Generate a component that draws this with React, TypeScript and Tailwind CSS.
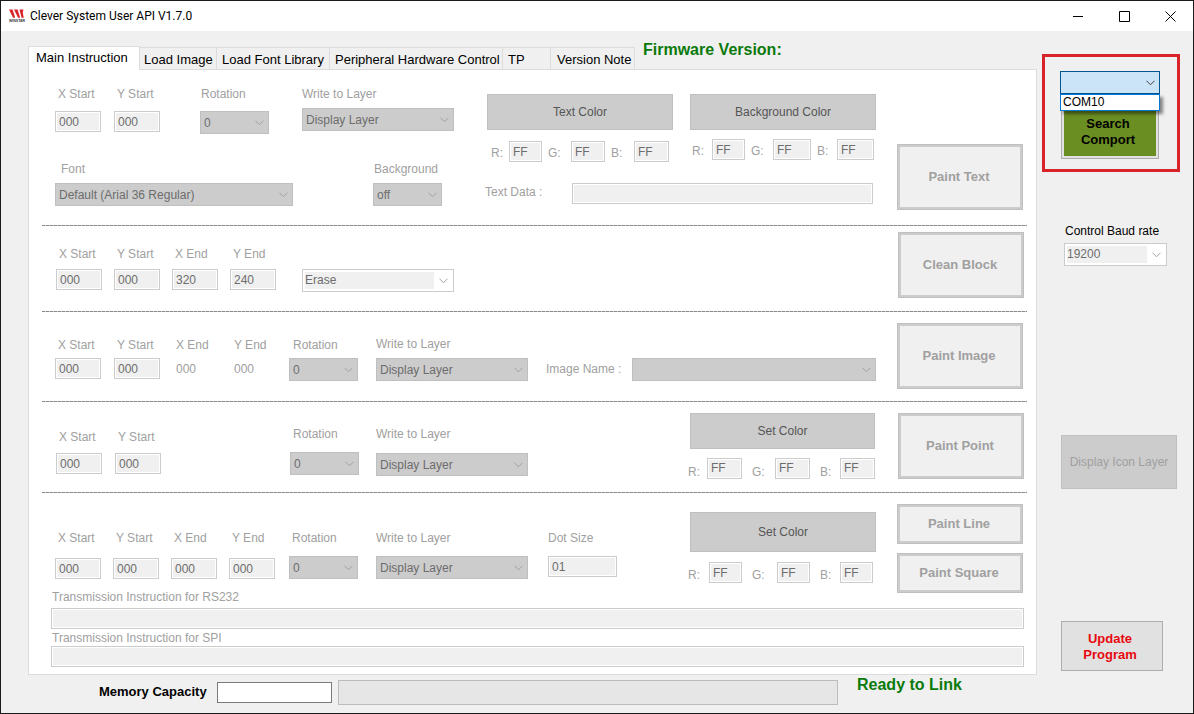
import { useId, type ReactNode } from "react";

function Chevron({ className = "" }: { className?: string }) {
  return (
    <svg
      viewBox="0 0 9 6"
      className={`pointer-events-none absolute top-1/2 right-[5px] h-[6px] w-[9px] -translate-y-1/2 ${className}`}
      fill="none"
      stroke="currentColor"
      aria-hidden="true"
    >
      <path d="M0.5 0.75 4.5 4.75 8.5 0.75" />
    </svg>
  );
}

type BoxProps = { id?: string; value?: string; className?: string; label?: string };

function TextBox({ id, value = "", className = "" }: BoxProps) {
  return (
    <input
      id={id}
      type="text"
      disabled
      defaultValue={value}
      className={`h-[21px] rounded-none border border-[#cccccc] bg-[#f0f0f0] px-[3px] text-xs text-[#6d6d6d] shadow-[inset_0_0_0_1px_#fff] ${className}`}
    />
  );
}

function Combo({ id, value = "", className = "", label }: BoxProps) {
  return (
    <div className={`relative ${className}`}>
      <select
        id={id}
        aria-label={label}
        disabled
        defaultValue={value}
        className="block h-[23px] w-full appearance-none rounded-none border border-[#bfbfbf] bg-[#cccccc] pl-[3px] text-xs text-[#6d6d6d] opacity-100"
      >
        <option>{value}</option>
      </select>
      <Chevron className="text-[#a0a0a0]" />
    </div>
  );
}

function EditCombo({ id, value = "", className = "", label }: BoxProps) {
  return (
    <div className={`relative border border-[#cccccc] bg-white p-0.5 ${className}`}>
      <select
        id={id}
        aria-label={label}
        disabled
        defaultValue={value}
        className="block h-[17px] w-full appearance-none rounded-none border-r-[17px] border-white bg-[#f0f0f0] text-xs leading-[17px] text-[#6d6d6d] opacity-100"
      >
        <option>{value}</option>
      </select>
      <Chevron className="text-[#a0a0a0]" />
    </div>
  );
}

function Field({
  label,
  className = "",
  labelClass = "pl-[3px]",
  children,
}: {
  label: string;
  className?: string;
  labelClass?: string;
  children: (id: string) => ReactNode;
}) {
  const id = useId();
  return (
    <div className={`flex flex-col ${className}`}>
      <label htmlFor={id} className={`whitespace-nowrap text-[#a0a0a0] ${labelClass}`}>
        {label}
      </label>
      {children(id)}
    </div>
  );
}

function Rgb({ className, labelClass, indent = "pl-1.5" }: { className: string; labelClass: string; indent?: string }) {
  const id = useId();
  return (
    <div className={`grid items-center ${className}`}>
      {["R", "G", "B"].map((c) => (
        <div key={c} className="contents">
          <label htmlFor={id + c} className={`text-[#a0a0a0] ${c === "R" ? "" : indent} ${labelClass}`}>
            {c}:
          </label>
          <TextBox id={id + c} value="FF" className="w-full" />
        </div>
      ))}
    </div>
  );
}

function ColorButton({ children, className = "h-9" }: { children: ReactNode; className?: string }) {
  return (
    <button type="button" disabled className={`w-full border border-[#bfbfbf] bg-[#cccccc] text-[#555555] ${className}`}>
      {children}
    </button>
  );
}

function PaintButton({ children, className = "" }: { children: ReactNode; className?: string }) {
  return (
    <button
      type="button"
      disabled
      className={`w-[126px] shrink-0 border border-[#bfbfbf] bg-[#f0f0f0] pr-0.5 text-[13px] font-bold text-[#a0a0a0] shadow-[inset_0_0_0_2px_#cccccc] ${className}`}
    >
      {children}
    </button>
  );
}

function Divider() {
  return <hr className="h-px border-0 bg-[repeating-linear-gradient(90deg,#8a8a8a_0_3px,#c4c4c4_3px_4px)]" />;
}

function TitleBar() {
  return (
    <header className="flex h-[30px] shrink-0 items-center bg-white pl-2">
      <svg viewBox="0 0 17 14" className="h-[14px] w-[17px]" aria-hidden="true">
        <g fill="#d9262c">
          <path d="M0 .5h3.6l2.6 8.3H4z" />
          <path d="M5 .5h3.6l2.6 8.3H9z" />
          <path d="M10.4.5h4l-.6 3.2 1 5.1h-2.2z" />
        </g>
        <text x="0" y="13" fontSize="3.5" fontWeight="bold" fontFamily="Liberation Sans, sans-serif" fill="#333">
          WINSTAR
        </text>
      </svg>
      <h1 className="ml-1 font-[Roboto,sans-serif] text-xs text-black">Clever System User API V1.7.0</h1>
      <div className="ml-auto flex h-full text-black">
        <button type="button" aria-label="Minimize" className="flex w-[45px] items-center justify-center">
          <svg viewBox="0 0 11 11" className="size-[11px]" fill="none" stroke="currentColor">
            <path d="M0 5.5h10" />
          </svg>
        </button>
        <button type="button" aria-label="Maximize" className="flex w-[46px] items-center justify-center">
          <svg viewBox="0 0 11 11" className="size-[11px]" fill="none" stroke="currentColor">
            <path d="M.5.5h10v10h-10z" />
          </svg>
        </button>
        <button type="button" aria-label="Close" className="flex w-[46px] items-center justify-center">
          <svg viewBox="0 0 11 11" className="size-[11px]" fill="none" stroke="currentColor">
            <path d="M.5.5l10 10M10.5.5l-10 10" />
          </svg>
        </button>
      </div>
    </header>
  );
}

function Tabs() {
  const tab =
    "h-[22px] border-t border-r border-[#dcdcdc] bg-[#f0f0f0] pt-0.5 text-left text-[13px] leading-5 whitespace-nowrap";
  return (
    <div className="flex items-end text-black">
      <div role="tablist" className="flex items-end">
        <button
          type="button"
          role="tab"
          aria-selected="true"
          className="relative -mb-px h-6 w-[112px] border border-b-0 border-[#dcdcdc] bg-white pb-0.5 pl-[7px] text-left text-[13px] leading-5 whitespace-nowrap"
        >
          Main Instruction
        </button>
        <button type="button" role="tab" className={`${tab} w-[77px] pl-1`}>Load Image</button>
        <button type="button" role="tab" className={`${tab} w-[113px] pl-[5px]`}>Load Font Library</button>
        <button type="button" role="tab" className={`${tab} w-[173px] pl-[5px]`}>Peripheral Hardware Control</button>
        <button type="button" role="tab" className={`${tab} w-12 pl-[5px]`}>TP</button>
        <button type="button" role="tab" className={`${tab} w-[84px] pl-[6px]`}>Version Note</button>
      </div>
      <p className="mb-[7px] ml-2 text-base leading-6 font-bold text-[#0b7a0b]">Firmware Version:</p>
    </div>
  );
}

function TextSection() {
  const id = useId();
  return (
    <section className="flex items-start pr-1 pb-[15px] pl-[13px]">
      <div className="flex flex-col gap-[27px] pt-4">
        <div className="flex">
          <div className="flex gap-[13px]">
            {["X Start", "Y Start"].map((label) => (
              <Field key={label} label={label} className="w-[46px] gap-[9px]">
                {(i) => <TextBox id={i} value="000" className="w-full" />}
              </Field>
            ))}
          </div>
          <Field label="Rotation" labelClass="pl-px" className="ml-10 w-[69px] gap-[9px]">
            {(i) => <Combo id={i} value="0" />}
          </Field>
          <Field label="Write to Layer" labelClass="" className="ml-[33px] w-[152px] gap-[6px]">
            {(i) => <Combo id={i} value="Display Layer" />}
          </Field>
        </div>
        <div className="flex gap-20">
          <Field label="Font" labelClass="pl-[6px]" className="w-[238px] gap-[6px]">
            {(i) => <Combo id={i} value="Default (Arial 36 Regular)" />}
          </Field>
          <Field label="Background" labelClass="pl-px" className="w-[69px] gap-[6px]">
            {(i) => <Combo id={i} value="off" />}
          </Field>
        </div>
      </div>
      <div className="ml-auto w-[389px] pt-6">
        <div className="grid grid-cols-2 gap-[17px]">
          <div>
            <ColorButton>Text Color</ColorButton>
            <Rgb className="mt-[11px] grid-cols-[18px_33px_29px_34px_29px_35px] pl-1" labelClass="pt-0.5" />
          </div>
          <div>
            <ColorButton>Background Color</ColorButton>
            <Rgb className="mt-[9px] grid-cols-[20px_33px_28px_38px_26px_37px] pl-0.5" labelClass="pt-0.5" />
          </div>
        </div>
        <div className="mt-[21px] -ml-0.5 flex items-center pr-[3px]">
          <label htmlFor={id} className="w-[87px] pb-[3px] text-[#a0a0a0]">Text Data :</label>
          <TextBox id={id} className="min-w-0 flex-1" />
        </div>
      </div>
      <PaintButton className="mt-[74px] ml-[21px] h-[66px]">Paint Text</PaintButton>
    </section>
  );
}

function CleanSection() {
  const fields = [["X Start", "000"], ["Y Start", "000"], ["X End", "320"], ["Y End", "240"]];
  return (
    <section className="flex items-start pr-[3px] pb-[13px] pl-[14px]">
      <div className="flex gap-3 pt-5">
        {fields.map(([label, value]) => (
          <Field key={label} label={label} className="w-[46px] gap-[7px]">
            {(i) => <TextBox id={i} value={value} className="w-full" />}
          </Field>
        ))}
      </div>
      <EditCombo value="Erase" label="Block action" className="mt-[43px] ml-[26px] w-[152px]" />
      <PaintButton className="mt-[6px] ml-auto h-[66px]">Clean Block</PaintButton>
    </section>
  );
}

function ImageSection() {
  const id = useId();
  return (
    <section className="flex items-start pr-1 pb-3 pl-[13px]">
      <div className="flex gap-[13px] pt-[25px]">
        {["X Start", "Y Start"].map((label) => (
          <Field key={label} label={label} className="w-[46px] gap-[5px]">
            {(i) => <TextBox id={i} value="000" className="w-full" />}
          </Field>
        ))}
        {["X End", "Y End"].map((label) => (
          <div key={label} className="flex w-[45px] flex-col gap-2 pl-[3px] text-[#a0a0a0]">
            <span>{label}</span>
            <span>000</span>
          </div>
        ))}
      </div>
      <Field label="Rotation" labelClass="pl-1" className="ml-[13px] w-[69px] gap-[5px] pt-[25px]">
        {(i) => <Combo id={i} value="0" />}
      </Field>
      <Field label="Write to Layer" labelClass="" className="ml-[18px] w-[152px] gap-[6px] pt-6">
        {(i) => <Combo id={i} value="Display Layer" />}
      </Field>
      <div className="mt-[46px] ml-[18px] flex flex-1 items-center">
        <label htmlFor={id} className="w-[86px] pb-0.5 text-[#a0a0a0]">Image Name :</label>
        <Combo id={id} className="flex-1" />
      </div>
      <PaintButton className="mt-[11px] ml-[21px] h-[66px]">Paint Image</PaintButton>
    </section>
  );
}

function PointSection() {
  return (
    <section className="flex items-start pr-[3px] pb-3 pl-[14px]">
      <div className="flex gap-[13px] pt-[27px]">
        {["X Start", "Y Start"].map((label) => (
          <Field key={label} label={label} className="w-[46px] gap-2">
            {(i) => <TextBox id={i} value="000" className="w-full" />}
          </Field>
        ))}
      </div>
      <Field label="Rotation" className="ml-[129px] w-[69px] gap-[10px] pt-6">
        {(i) => <Combo id={i} value="0" />}
      </Field>
      <Field label="Write to Layer" labelClass="" className="ml-[17px] w-[152px] gap-[11px] pt-6">
        {(i) => <Combo id={i} value="Display Layer" />}
      </Field>
      <div className="ml-auto w-[185px] pt-[11px]">
        <ColorButton>Set Color</ColorButton>
        <Rgb className="mt-[7px] -ml-0.5 grid-cols-[19px_35px_33px_35px_30px_35px]" labelClass="pt-2" indent="pl-2.5" />
      </div>
      <PaintButton className="mt-[11px] ml-[23px] h-[66px]">Paint Point</PaintButton>
    </section>
  );
}

function LineSection() {
  return (
    <section className="flex items-start pr-1 pl-[13px]">
      <div className="flex gap-3 pt-[37px]">
        {["X Start", "Y Start", "X End", "Y End"].map((label) => (
          <Field key={label} label={label} className="w-[46px] gap-3">
            {(i) => <TextBox id={i} value="000" className="w-full" />}
          </Field>
        ))}
      </div>
      <Field label="Rotation" className="ml-[14px] w-[69px] gap-[10px] pt-[37px]">
        {(i) => <Combo id={i} value="0" />}
      </Field>
      <Field label="Write to Layer" labelClass="" className="ml-[18px] w-[152px] gap-[10px] pt-[37px]">
        {(i) => <Combo id={i} value="Display Layer" />}
      </Field>
      <Field label="Dot Size" labelClass="" className="ml-5 w-[69px] gap-[10px] pt-[37px]">
        {(i) => <TextBox id={i} value="01" className="w-full" />}
      </Field>
      <div className="ml-auto w-[186px] pt-[19px]">
        <ColorButton className="h-10">Set Color</ColorButton>
        <Rgb className="mt-[10px] -ml-0.5 grid-cols-[21px_33px_35px_33px_30px_33px]" labelClass="pt-1" indent="pl-2.5" />
      </div>
      <div className="mt-[11px] ml-[21px] flex flex-col gap-[9px]">
        <PaintButton className="h-10">Paint Line</PaintButton>
        <PaintButton className="h-10">Paint Square</PaintButton>
      </div>
    </section>
  );
}

function MainPanel() {
  return (
    <main className="flex-1 border border-[#dcdcdc] bg-white pr-[9px] pl-[13px]">
      <TextSection />
      <Divider />
      <CleanSection />
      <Divider />
      <ImageSection />
      <Divider />
      <PointSection />
      <Divider />
      <LineSection />
      <div className="flex flex-col pr-[3px] pb-[7px] pl-[9px]">
        <Field label="Transmission Instruction for RS232" labelClass="pl-px" className="-mt-1 gap-[3px]">
          {(i) => <TextBox id={i} className="w-full" />}
        </Field>
        <Field label="Transmission Instruction for SPI" labelClass="pl-px" className="mt-px">
          {(i) => <TextBox id={i} className="w-full" />}
        </Field>
      </div>
    </main>
  );
}

function StatusBar() {
  return (
    <footer className="flex h-[38px] shrink-0 items-start pl-[71px]">
      <label htmlFor="memory" className="mt-2 w-[118px] text-[13px] font-bold text-black">
        Memory Capacity
      </label>
      <input id="memory" type="text" className="mt-[7px] h-[21px] w-[115px] rounded-none border border-[#7a7a7a] bg-white px-1" />
      <div
        role="progressbar"
        aria-label="Memory usage"
        aria-valuenow={0}
        className="mt-[5px] ml-[6px] h-[25px] flex-1 border border-[#bcbcbc] bg-[#e6e6e6]"
      />
      <p className="ml-[19px] w-[180px] text-base leading-5 font-bold text-[#0b7a0b]">Ready to Link</p>
    </footer>
  );
}

function SidePanel() {
  return (
    <aside className="w-[156px] shrink-0 pt-[23px] pl-[5px]">
      <div className="h-[118px] w-[138px] border-[3px] border-[#d8232a] pt-[14px] pl-[15px]">
        <div className="relative z-10 w-[100px]">
          <select
            aria-label="COM port"
            defaultValue=""
            className="block h-[23px] w-full appearance-none rounded-none border border-[#00548f] bg-[#cce4f7] pl-[3px] text-xs"
          >
            <option value=""></option>
            <option>COM10</option>
          </select>
          <Chevron className="text-[#404040]" />
          <ul
            role="listbox"
            aria-label="COM port list"
            className="absolute top-full left-0 w-full border border-[#0078d7] bg-white pl-0.5 leading-[15px] text-black shadow-[3px_3px_3px_rgba(0,0,0,0.45)]"
          >
            <li role="option" aria-selected="false">COM10</li>
          </ul>
        </div>
        <button
          type="button"
          className="ml-px h-[65px] w-[98px] border border-[#adadad] bg-[#e1e1e1] p-0.5 text-[13px] leading-4 font-bold text-black"
        >
          <span className="flex h-full items-center justify-center bg-[#6b8e23] pt-2.5 pr-1">
            Search
            <br />
            Comport
          </span>
        </button>
      </div>
      <div className="mt-[51px] ml-[22px] flex flex-col gap-1">
        <label htmlFor="baud" className="pl-px whitespace-nowrap text-black">Control Baud rate</label>
        <EditCombo id="baud" value="19200" className="w-[103px]" />
      </div>
      <button type="button" disabled className="mt-[169px] ml-[19px] h-[54px] w-[116px] border border-[#bfbfbf] bg-[#cccccc] text-[#a0a0a0]">
        Display Icon Layer
      </button>
      <button
        type="button"
        className="mt-[132px] ml-[19px] h-[50px] w-[102px] border border-[#adadad] bg-[#e1e1e1] pt-0.5 pr-5 pl-4 text-[13px] leading-4 font-bold text-[#e8090f]"
      >
        Update Program
      </button>
    </aside>
  );
}

export default function App() {
  return (
    <div className="flex min-h-screen flex-col border border-[#1a1a1a] bg-[#f0f0f0] font-['Liberation_Sans',Arial,sans-serif] text-xs">
      <TitleBar />
      <div className="flex flex-1">
        <div className="flex min-w-0 flex-1 flex-col pl-[27px]">
          <div className="flex h-[38px] flex-col justify-end">
            <Tabs />
          </div>
          <MainPanel />
          <StatusBar />
        </div>
        <SidePanel />
      </div>
    </div>
  );
}
